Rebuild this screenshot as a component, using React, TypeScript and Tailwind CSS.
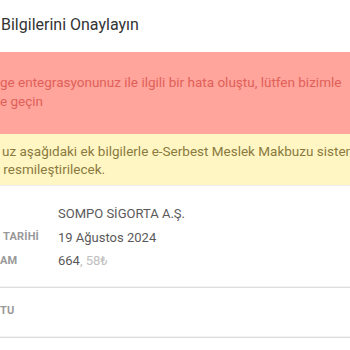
import React from 'react';

const rows = [
  { label: '', value: <span>SOMPO SİGORTA A.Ş.</span> },
  { label: '\u00a0TARİHİ', value: <span>19 Ağustos 2024</span> },
  {
    label: 'AM',
    value: (
      <span>
        664<span className="text-[#c0c0c0]">, 58₺</span>
      </span>
    ),
  },
];

const App: React.FC = () => {
  return (
    <div className="w-[350px] h-[350px] overflow-hidden bg-white font-['Roboto',sans-serif]">
      {/* Header */}
      <div className="h-[52px] flex items-center">
        <h1 className="text-[16px] text-[#333333] whitespace-nowrap pl-[1px] pb-[2px]">Bilgilerini Onaylayın</h1>
      </div>

      {/* Error alert */}
      <div className="h-[82px] bg-[#ffa59b] text-[#e0605a] text-[13.5px] leading-[19px] pt-[21px] whitespace-nowrap overflow-hidden">
        <div>ge entegrasyonunuz ile ilgili bir hata oluştu, lütfen bizimle</div>
        <div>e geçin</div>
      </div>

      {/* Info alert */}
      <div className="h-[52px] bg-[#fff6c4] text-[#8a7a3e] text-[13.5px] leading-[18px] pt-[8px] whitespace-nowrap overflow-hidden border-b border-[#ececec]">
        <div className="pl-[2px]">uz aşağıdaki ek bilgilerle e-Serbest Meslek Makbuzu sisteminde</div>
        <div>&nbsp;resmileştirilecek.</div>
      </div>

      {/* Details */}
      <div className="pt-[18px] pb-[15px] flex flex-col gap-[4px]">
        {rows.map((r, i) => (
          <div key={i} className="flex items-center h-[19.5px]">
            <div className="w-[58px] text-[11px] font-bold text-[#999999] tracking-[0.2px]">{r.label}</div>
            <div className="text-[13px] text-[#5a5a5a]">{r.value}</div>
          </div>
        ))}
      </div>

      <div className="border-t border-[#f3f3f3]" />
      <div className="border-t border-[#dedede]" />
      <div className="h-[48px] flex items-center text-[11px] font-bold text-[#999999] tracking-[0.2px]">TU</div>
      <div className="border-t border-[#f3f3f3]" />
      <div className="border-t border-[#dedede]" />
    </div>
  );
};

export default App;
